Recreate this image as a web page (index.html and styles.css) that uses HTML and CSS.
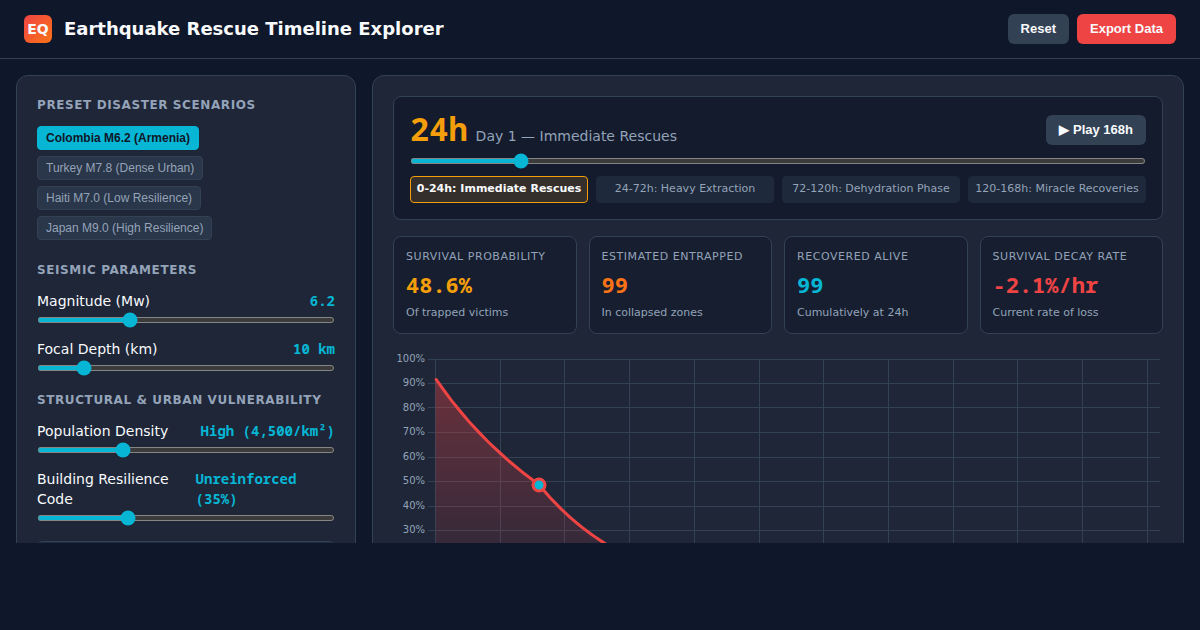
FILE: index.html
```html
<!DOCTYPE html>
<html lang="en">
<head>
<meta charset="utf-8">
<title>Earthquake Rescue Timeline Explorer</title>
<link rel="stylesheet" href="styles.css">
</head>
<body>
<div class="app">
  <header class="topbar">
    <div class="brand">
      <span class="logo">EQ</span>
      <h1>Earthquake Rescue Timeline Explorer</h1>
    </div>
    <div class="actions">
      <button class="btn" type="button">Reset</button>
      <button class="btn btn-danger" type="button">Export Data</button>
    </div>
  </header>
  <main class="workspace">
    <aside class="panel sidebar">
      <section>
        <h2>Preset Disaster Scenarios</h2>
        <div class="chips">
          <button class="chip active" type="button">Colombia M6.2 (Armenia)</button>
          <button class="chip" type="button">Turkey M7.8 (Dense Urban)</button>
          <button class="chip" type="button">Haiti M7.0 (Low Resilience)</button>
          <button class="chip" type="button">Japan M9.0 (High Resilience)</button>
        </div>
      </section>
      <section>
        <h2>Seismic Parameters</h2>
        <div class="controls">
          <div class="control">
            <label for="mag"><span>Magnitude (Mw)</span><span class="val">6.2</span></label>
            <input id="mag" type="range" min="5" max="9" step="0.1" value="6.2">
          </div>
          <div class="control">
            <label for="depth"><span>Focal Depth (km)</span><span class="val">10 km</span></label>
            <input id="depth" type="range" min="1" max="66" value="10">
          </div>
        </div>
      </section>
      <section>
        <h2>Structural &amp; Urban Vulnerability</h2>
        <div class="controls">
          <div class="control">
            <label for="density"><span>Population Density</span><span class="val">High (4,500/km²)</span></label>
            <input id="density" type="range" min="500" max="15000" step="100" value="4500">
          </div>
          <div class="control">
            <label for="code"><span>Building Resilience Code</span><span class="val">Unreinforced (35%)</span></label>
            <input id="code" type="range" min="10" max="95" value="35">
          </div>
        </div>
      </section>
      <div class="note"></div>
    </aside>
    <section class="panel content">
      <div class="card timeline">
        <div class="timeline-head">
          <div class="clock">
            <span class="hour">24h</span>
            <label class="phase-name" for="hour">Day 1 — Immediate Rescues</label>
          </div>
          <button class="btn" type="button">▶ Play 168h</button>
        </div>
        <input id="hour" type="range" min="0" max="168" value="24">
        <div class="phases">
          <div class="phase active">0-24h: Immediate Rescues</div>
          <div class="phase">24-72h: Heavy Extraction</div>
          <div class="phase">72-120h: Dehydration Phase</div>
          <div class="phase">120-168h: Miracle Recoveries</div>
        </div>
      </div>
      <div class="metrics">
        <div class="card metric"><div class="name">Survival Probability</div><div class="num amber">48.6%</div><div class="sub">Of trapped victims</div></div>
        <div class="card metric"><div class="name">Estimated Entrapped</div><div class="num orange">99</div><div class="sub">In collapsed zones</div></div>
        <div class="card metric"><div class="name">Recovered Alive</div><div class="num cyan">99</div><div class="sub">Cumulatively at 24h</div></div>
        <div class="card metric"><div class="name">Survival Decay Rate</div><div class="num red">-2.1%/hr</div><div class="sub">Current rate of loss</div></div>
      </div>
      <svg class="chart" viewBox="0 0 770 270" role="img" aria-label="Survival probability by hour">
        <defs>
          <linearGradient id="area" gradientUnits="userSpaceOnUse" x1="0" y1="9" x2="0" y2="253">
            <stop offset="0" stop-color="#ef4444" stop-opacity="0.4"/>
            <stop offset="1" stop-color="#ef4444" stop-opacity="0.02"/>
          </linearGradient>
        </defs>
        <path class="grid" d="M35 9.5H767M35 33.5H767M35 57.5H767M35 82.5H767M35 107.5H767M35 131.5H767M35 156.5H767M35 180.5H767M35 205.5H767M35 229.5H767M35 253.5H767"/>
        <path class="grid" d="M42.500 9V258M107.500 9V258M171.500 9V258M236.500 9V258M301.500 9V258M366.500 9V258M430.500 9V258M495.500 9V258M560.500 9V258M624.500 9V258M689.500 9V258M754.500 9V258"/>
        <g class="ticks">
          <text x="32" y="12">100%</text>
          <text x="32" y="36">90%</text>
          <text x="32" y="61">80%</text>
          <text x="32" y="85">70%</text>
          <text x="32" y="110">60%</text>
          <text x="32" y="134">50%</text>
          <text x="32" y="159">40%</text>
          <text x="32" y="183">30%</text>
        </g>
        <path fill="url(#area)" d="M42.500 28.500C72 72 106 106 146 134.700C164 157 184 176 212 193.500C300 246 480 251 767 252V253H42.500Z"/>
        <path class="curve" d="M42.500 28.500C72 72 106 106 146 134.700C164 157 184 176 212 193.500C300 246 480 251 767 252"/>
        <circle class="marker" cx="146" cy="135" r="6"/>
      </svg>
    </section>
  </main>
</div>
</body>
</html>
```
FILE: styles.css
```css
* { box-sizing: border-box; }

body {
  margin: 0;
  background: #0f172a;
  color: #f8fafc;
  font-family: "DejaVu Sans", sans-serif;
  font-size: 14px;
}

h1, h2 { margin: 0; }

.app {
  height: 100vh;
  padding-bottom: 87px;
  display: flex;
  flex-direction: column;
  overflow: hidden;
}

.topbar {
  display: flex;
  justify-content: space-between;
  align-items: center;
  padding: 14px 24px;
  border-bottom: 1px solid #334155;
}

.brand { display: flex; align-items: center; gap: 12px; }

.logo {
  width: 28px;
  height: 28px;
  border-radius: 6px;
  background: linear-gradient(135deg, #ef4444, #f97316);
  font-size: 14px;
  font-weight: bold;
  line-height: 28px;
  text-align: center;
}

h1 { font-size: 18px; line-height: 28px; }

.actions { display: flex; gap: 8px; }

.btn {
  border: 0;
  border-radius: 6px;
  padding: 7px 13px;
  background: #334155;
  color: #f8fafc;
  font: bold 13px/16px "Liberation Sans", sans-serif;
}

.btn-danger { background: #ef4444; }

.workspace {
  flex: 1;
  min-height: 0;
  display: grid;
  grid-template-columns: 340px 1fr;
  gap: 16px;
  padding: 16px 16px 0;
  overflow: hidden;
  align-items: start;
}

.panel {
  background: #1e2638;
  border: 1px solid #334155;
  border-radius: 12px;
  padding: 20px;
}

.sidebar h2 {
  margin-bottom: 12px;
  color: #94a3b8;
  font-size: 12px;
  line-height: 18px;
  letter-spacing: 0.05em;
  text-transform: uppercase;
}

.sidebar section { margin-bottom: 15px; }
.sidebar section:first-child { margin-bottom: 21px; }

.chips { display: flex; flex-wrap: wrap; gap: 6px; }

.chip {
  border: 1px solid #334155;
  border-radius: 4px;
  padding: 4px 8px;
  background: #2a3649;
  color: #94a3b8;
  font: 12px/14px "Liberation Sans", sans-serif;
}

.chip.active {
  border-color: #06b6d4;
  background: #06b6d4;
  color: #0f172a;
  font-weight: bold;
}

.controls { display: grid; gap: 11px; }

.control label {
  display: flex;
  justify-content: space-between;
  margin-bottom: 1px;
  line-height: 20px;
}

.val, .hour, .num {
  font-family: "Noto Sans Mono", "Droid Sans Mono", monospace;
  font-weight: bold;
}

.val { color: #06b6d4; }

input[type="range"] {
  display: block;
  width: 100%;
  height: 6px;
  margin: 5px 0;
  accent-color: #06b6d4;
}

.control input[type="range"] { margin-top: 6px; }
.control label { margin-bottom: 0; }

.note {
  height: 80px;
  border: 1px solid #334155;
  border-radius: 6px;
  background: #222c3f;
}

.card {
  border: 1px solid #334155;
  border-radius: 8px;
  background: #131b2d;
}

.timeline { padding: 16px; }

.timeline-head {
  display: flex;
  justify-content: space-between;
  align-items: center;
  margin-bottom: 12px;
}

.timeline input[type="range"] { margin: 0 0 12px; }

.clock { display: flex; align-items: baseline; gap: 8px; }
.hour { color: #f59e0b; font-size: 32px; line-height: 32px; }
.phase-name { color: #94a3b8; line-height: 20px; }

.phases {
  display: grid;
  grid-template-columns: repeat(4, 1fr);
  gap: 8px;
}

.phase {
  border: 1px solid #1e293b;
  border-radius: 4px;
  padding: 3px 0 5px;
  background: #1e293b;
  color: #94a3b8;
  font-size: 11px;
  line-height: 17px;
  text-align: center;
  white-space: nowrap;
}

.phase.active {
  border-color: #f59e0b;
  background: #352f2b;
  color: #f8fafc;
  font-weight: bold;
}

.metrics {
  display: grid;
  grid-template-columns: repeat(4, 1fr);
  gap: 12px;
  margin: 16px 0;
}

.metric {
  padding: 12px;
  background: #161e30;
  color: #94a3b8;
  font-size: 11px;
  line-height: 16px;
}

.name { letter-spacing: 0.05em; text-transform: uppercase; }
.num { margin: 3px 0 5px; font-size: 22px; line-height: 32px; }
.amber { color: #f59e0b; }
.orange { color: #f97316; }
.cyan { color: #06b6d4; }
.red { color: #ef4444; }

.chart { display: block; width: 100%; }
.grid { fill: none; stroke: #334155; stroke-width: 1; }
.ticks { fill: #94a3b8; font-size: 10px; text-anchor: end; }
.curve { fill: none; stroke: #ef4444; stroke-width: 3; }
.marker { fill: #06b6d4; stroke: #ef4444; stroke-width: 3; }
```
